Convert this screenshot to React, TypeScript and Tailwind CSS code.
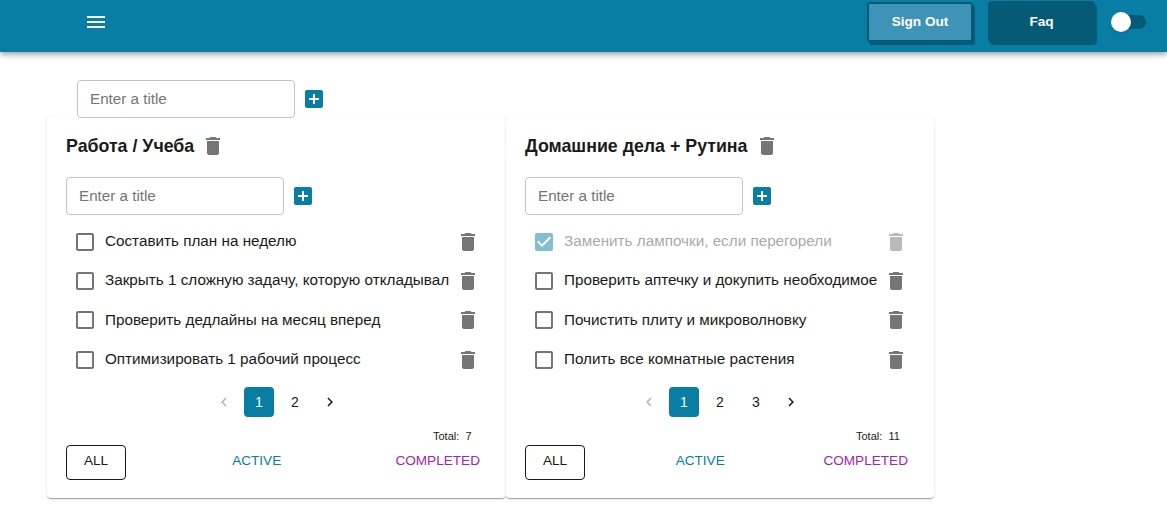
const Ic = ({ d, className }: { d: string; className?: string }) => (
  <svg viewBox="0 0 24 24" className={className} fill="currentColor"><path d={d} /></svg>
);
const TRASH = "M6 19c0 1.1.9 2 2 2h8c1.1 0 2-.9 2-2V7H6v12zM19 4h-3.5l-1-1h-5l-1 1H5v2h14V4z";
const ADD = "M19 3H5c-1.11 0-2 .9-2 2v14c0 1.1.89 2 2 2h14c1.1 0 2-.9 2-2V5c0-1.1-.9-2-2-2zm-2 10h-4v4h-2v-4H7v-2h4V7h2v4h4v2z";
const BOX = "M19 5v14H5V5h14m0-2H5c-1.1 0-2 .9-2 2v14c0 1.1.9 2 2 2h14c1.1 0 2-.9 2-2V5c0-1.1-.9-2-2-2z";
const CHECKED = "M19 3H5c-1.11 0-2 .9-2 2v14c0 1.1.89 2 2 2h14c1.1 0 2-.9 2-2V5c0-1.1-.9-2-2-2zm-9 14l-5-5 1.41-1.41L10 14.17l7.59-7.59L19 8l-9 9z";
const MENU = "M3 18h18v-2H3v2zm0-5h18v-2H3v2zm0-7v2h18V6H3z";
const LEFT = "M15.41 7.41 14 6l-6 6 6 6 1.41-1.41L10.83 12z";
const RIGHT = "M10 6 8.59 7.41 13.17 12l-4.58 4.59L10 18l6-6z";

function AddForm({ className }: { className?: string }) {
  return (
    <div className={"flex items-center " + (className ?? "")}>
      <div className="relative z-10 h-[38px] w-[218px] rounded border border-[#c4c4c4] bg-white pl-3 flex items-center text-[15.2px] text-[#757575]">Enter a title</div>
      <Ic d={ADD} className="ml-[7px] h-[24px] w-[24px] text-[#087ea4]" />
    </div>
  );
}

type Task = { text: string; done?: boolean };

function Row({ task }: { task: Task }) {
  return (
    <div className={"flex h-[39.3px] items-center " + (task.done ? "opacity-50" : "")}>
      <Ic d={task.done ? CHECKED : BOX} className={"ml-[7px] h-[24px] w-[24px] shrink-0 " + (task.done ? "text-[#087ea4]" : "text-[#757575]")} />
      <span className={"ml-[8px] flex-1 whitespace-nowrap text-[15.25px] -mt-[0.5px] " + (task.done ? "text-[#555]" : "text-[#1a1a1a]")}>{task.text}</span>
      <Ic d={TRASH} className="h-[24px] w-[24px] shrink-0 text-[#757575]" />
    </div>
  );
}

function Card({ title, tasks, pages, total, w, rowW, pagerPad, totalPad, footW }: { title: string; tasks: Task[]; pages: number[]; total: number; w: string; rowW: string; pagerPad: string; totalPad: string; footW: string }) {
  return (
    <div className={"flex h-[382px] flex-col rounded bg-white pl-[19px] pt-[17px] shadow-[0_2px_1px_-1px_rgba(0,0,0,0.2),0_1px_1px_0_rgba(0,0,0,0.14),0_1px_3px_0_rgba(0,0,0,0.12)] " + w}>
      <div className="flex h-[26px] items-center">
        <h3 className="text-[17.8px] font-bold text-[#1a1a1a]">{title}</h3>
        <Ic d={TRASH} className="ml-[7px] h-[24px] w-[24px] text-[#757575]" />
      </div>
      <AddForm className="mt-[18px]" />
      <div className={"mt-[7px] " + rowW}>
        {tasks.map((t) => <Row key={t.text} task={t} />)}
      </div>
      <div className={"mt-[8px] flex h-[30px] items-center " + pagerPad}>
        <Ic d={LEFT} className="mr-[5px] h-[18px] w-[18px] text-[#b5b5b5]" />
        {pages.map((p) => (
          <div key={p} className={"ml-[6px] flex h-[30px] w-[30px] items-center justify-center rounded text-sm " + (p === 1 ? "bg-[#087ea4] text-white" : "text-[#1a1a1a]")}>{p}</div>
        ))}
        <Ic d={RIGHT} className="ml-[11px] h-[18px] w-[18px] text-[#1a1a1a]" />
      </div>
      <div className={"mt-[12px] text-[11px] font-medium leading-[14px] text-[#1a1a1a] " + totalPad}>Total:&nbsp; {total}</div>
      <div className={"mt-[2px] flex items-center justify-between text-[13.6px] " + footW}>
        <div className="flex h-[35px] w-[60px] items-center justify-center rounded border border-[#1a1a1a] pb-[2px] text-[#1a1a1a]">ALL</div>
        <span className="mr-[8px] pb-[3px] text-[#087ea4]">ACTIVE</span>
        <span className="pb-[3px] text-[#9c27b0]">COMPLETED</span>
      </div>
    </div>
  );
}

export default function App() {
  return (
    <div className="h-[526px] overflow-hidden bg-white font-['Liberation_Sans',Arial,sans-serif]">
      <header className="flex h-[52px] items-start bg-[#087ea4] shadow-[0_2px_4px_-1px_rgba(0,0,0,0.2),0_4px_5px_0_rgba(0,0,0,0.14),0_1px_10px_0_rgba(0,0,0,0.12)]">
        <Ic d={MENU} className="ml-[84px] mt-[10px] h-[24px] w-[24px] text-white" />
        <div className="ml-auto mr-[21px] flex items-start">
          <div className="mt-[2px] flex h-[40px] w-[106px] items-center justify-center rounded-[3px] border-2 border-[#055a75] bg-[#3d94b6] text-[13.6px] font-bold text-white shadow-[2px_3px_0_0_#055a75]">Sign Out</div>
          <div className="mt-[1px] ml-[15px] flex h-[41px] w-[107px] items-center justify-center rounded bg-[#055a75] pt-[2px] text-[13.6px] font-bold text-white shadow-[2px_3px_0_0_#055a75]">Faq</div>
          <div className="relative mt-[15px] ml-[17px] h-[14px] w-[34px] rounded-full bg-[#055a75]">
            <div className="absolute -left-[1px] -top-[3px] h-[20px] w-[20px] rounded-full bg-white shadow" />
          </div>
        </div>
      </header>
      <AddForm className="ml-[77px] mt-[28px]" />
      <div className="-mt-[2px] ml-[47px] flex">
        <Card title="Работа / Учеба" w="w-[459px]" rowW="w-[414px]" pagerPad="pl-[149px]" totalPad="pl-[367px]" footW="w-[414px]" pages={[1, 2]} total={7}
          tasks={[{ text: "Составить план на неделю" }, { text: "Закрыть 1 сложную задачу, которую откладывал" }, { text: "Проверить дедлайны на месяц вперед" }, { text: "Оптимизировать 1 рабочий процесс" }]} />
        <Card title="Домашние дела + Рутина" w="w-[428px]" rowW="w-[383px]" pagerPad="pl-[115px]" totalPad="pl-[331px]" footW="w-[383px]" pages={[1, 2, 3]} total={11}
          tasks={[{ text: "Заменить лампочки, если перегорели", done: true }, { text: "Проверить аптечку и докупить необходимое" }, { text: "Почистить плиту и микроволновку" }, { text: "Полить все комнатные растения" }]} />
      </div>
    </div>
  );
}
